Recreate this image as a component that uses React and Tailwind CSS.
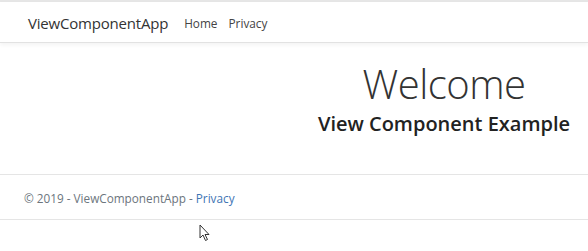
import React from 'react';

const Cursor = () => (
  <svg width="12" height="18" viewBox="0 0 12 18" className="absolute left-[199px] top-[224px]">
    <path d="M1 1 L1 14 L4 11 L6.5 16.5 L8.5 15.5 L6 10.5 L10 10.5 Z" fill="#fff" stroke="#333" strokeWidth="1" strokeLinejoin="round" />
  </svg>
);

const App = () => {
  return (
    <div className="relative w-[588px] h-[251px] bg-white overflow-hidden font-['Open_Sans','Noto_Sans',sans-serif] text-[#212529]">
      <div className="h-[2px] bg-[#e6e6e6]" />
      <nav className="h-[41px] flex items-center pl-[28px] pt-[3px] bg-white border-b border-[#e2e2e2] shadow-[0_2px_4px_rgba(0,0,0,0.05)]">
        <span className="text-[15px] text-[#333] tracking-[-0.2px]">ViewComponentApp</span>
        <div className="flex gap-[11px] ml-[16px] text-[11.8px] text-[#444]">
          <span>Home</span>
          <span>Privacy</span>
        </div>
      </nav>
      <main className="h-[131px] pl-[300px] pt-[17px] text-center">
        <h1 className="text-[40px] font-light leading-[48px] text-[#333] tracking-[-0.5px]">Welcome</h1>
        <h2 className="text-[20px] font-semibold leading-[26px] mt-[3px] text-[#222]">View Component Example</h2>
      </main>
      <footer className="h-[46px] border-t border-b border-[#e5e5e5] flex items-center pl-[24px] pt-[3px] text-[11.75px] text-[#6c757d]">
        <span>
          © 2019 - ViewComponentApp - <span className="text-[#3f75b5]">Privacy</span>
        </span>
      </footer>
      <Cursor />
    </div>
  );
};

export default App;
